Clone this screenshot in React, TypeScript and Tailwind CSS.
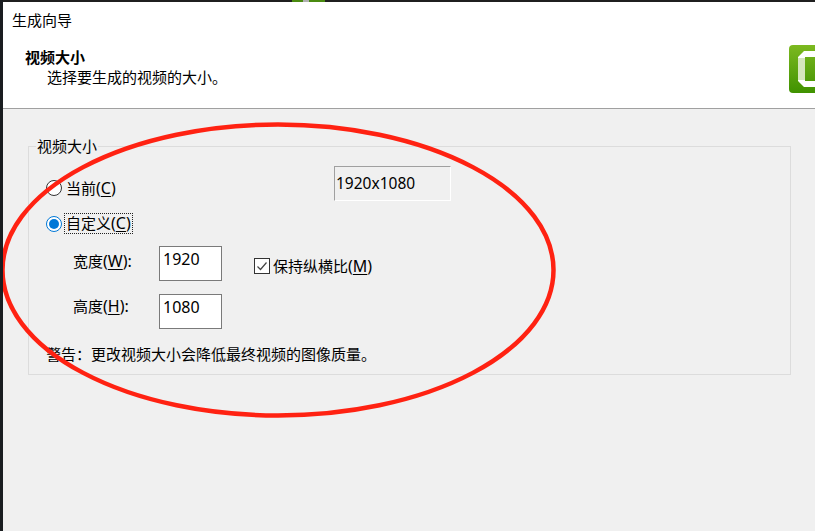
import React from "react";

const Mnemonic = ({ label, k, tail = ")" }: { label: string; k: string; tail?: string }) => (
  <span>
    {label}
    <span className="text-[16px]">
      (<span className="underline underline-offset-2">{k}</span>{tail}
    </span>
  </span>
);

const NumberBox = ({ value }: { value: string }) => (
  <div className="w-[63px] h-[35px] bg-white border border-[#7a7a7a] pl-[3px] pt-[2px] text-[16px] leading-[20px]">{value}</div>
);

export default function App() {
  return (
    <div
      className="relative w-[815px] h-[531px] overflow-hidden flex flex-col bg-[#f0f0f0] border-l-[3px] border-[#1a1d20] text-[15px] leading-[20px] text-black"
      style={{ fontFamily: '"Noto Sans", "Noto Sans CJK SC", sans-serif' }}
    >
      <div className="h-[2px] bg-[#1f1f1f] shrink-0 flex">
        <div className="w-[289px]" />
        <div className="w-[11px] bg-[#4a8a10]" />
        <div className="w-[6px] bg-[#b0b0b0]" />
        <div className="w-[16px] bg-[#4a8a10]" />
      </div>

      {/* header */}
      <div className="h-[106px] shrink-0 bg-white relative">
        <div className="pl-[9px] pt-[8px]">生成向导</div>
        <div className="pl-[22px] pt-[17px] font-bold">视频大小</div>
        <div className="pl-[44px]">选择要生成的视频的大小。</div>
        <div className="absolute right-0 top-[43px] w-[26px] h-[48px] rounded-l-[4px] bg-gradient-to-b from-[#7cb91f] to-[#3f9200] overflow-hidden">
          <svg width="26" height="48" viewBox="0 0 26 48">
            <path d="M26 6H15l-6 6v24l6 6h11v-6H16V12h10z" fill="#fff" />
            <rect x="9" y="13" width="7" height="22" fill="#d5e6bd" />
          </svg>
        </div>
      </div>
      <div className="h-px bg-[#a0a0a0] shrink-0" />

      {/* group box */}
      <div className="ml-[25px] mr-[24px] mt-[37px] h-[229px] border border-[#dcdcdc] relative">
        <div className="absolute left-[7px] top-[-11px] px-px bg-[#f0f0f0]">视频大小</div>

        <div className="pl-[17px] pt-[19px] flex items-start">
          <div className="w-[288px] flex items-center gap-[4px] pt-[12px]">
            <span className="w-[16px] h-[16px] rounded-full bg-white border border-[#333]" />
            <Mnemonic label="当前" k="C" />
          </div>
          <div className="w-[117px] h-[35px] border-l border-t border-[#a0a0a0] border-r border-b border-r-white border-b-white pl-px pt-[6px] text-[15.5px]">
            1920x1080
          </div>
        </div>

        <div className="pl-[17px] pt-[12px] flex items-center gap-[2px]">
          <span className="w-[16px] h-[16px] rounded-full bg-white border border-[#0078d7] flex items-center justify-center">
            <span className="w-[10px] h-[10px] rounded-full bg-[#0078d7]" />
          </span>
          <span className="border border-dotted border-[#222] px-px h-[21px] leading-[19px]">
            <Mnemonic label="自定义" k="C" />
          </span>
        </div>

        <div className="pl-[44px] pt-[12px] flex items-start">
          <div className="w-[86px] pt-[5px]">
            <Mnemonic label="宽度" k="W" tail="):" />
          </div>
          <NumberBox value="1920" />
          <div className="ml-[32px] pt-[10px] flex items-center gap-[3px]">
            <span className="w-[16px] h-[16px] bg-white border border-[#333] flex items-center justify-center">
              <svg width="12" height="12" viewBox="0 0 12 12" fill="none" stroke="#444" strokeWidth="1.2">
                <path d="M1.5 6.5 4.5 9.5 10.5 2.5" />
              </svg>
            </span>
            <Mnemonic label="保持纵横比" k="M" />
          </div>
        </div>

        <div className="pl-[44px] pt-[13px] flex items-start">
          <div className="w-[86px] pt-[2px]">
            <Mnemonic label="高度" k="H" tail="):" />
          </div>
          <NumberBox value="1080" />
        </div>

        <div className="pl-[17px] pt-[15px]">警告：更改视频大小会降低最终视频的图像质量。</div>
      </div>

      {/* red annotation */}
      <svg className="absolute left-0 top-0 pointer-events-none" width="812" height="531" viewBox="3 0 812 531" fill="none">
        <ellipse cx="278" cy="270" rx="275.5" ry="145.5" stroke="#ff2212" strokeWidth="4.5" />
      </svg>
    </div>
  );
}
